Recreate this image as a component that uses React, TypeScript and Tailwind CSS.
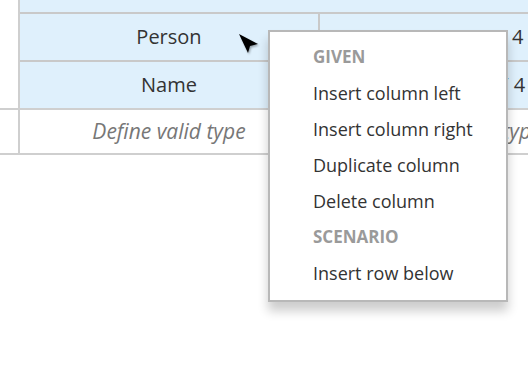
import React from "react";

const font = { fontFamily: '"Open Sans", "Liberation Sans", sans-serif' };

export default function App() {
  return (
    <div className="relative w-[528px] h-[376px] overflow-hidden bg-white" style={font}>
      {/* table */}
      <div className="flex flex-col w-[620px]">
        <div className="flex">
          <div className="w-[20px] h-[108px] border-r-2 border-[#cfcfcf] bg-white" />
          <div className="flex flex-col bg-[#dff0fc]">
            <div className="h-[14px] w-[600px] border-b-2 border-[#c9c9c9]" />
            <div className="flex h-[48px] border-b-2 border-[#c9c9c9]">
              <div className="w-[300px] border-r-2 border-[#c9c9c9] flex items-center justify-center text-[20px] text-[#333]">Person</div>
              <div className="w-[296px] flex items-center justify-center text-[20px] text-[#333]">INSTANCE 4</div>
            </div>
            <div className="flex h-[46px]">
              <div className="w-[300px] border-r-2 border-[#c9c9c9] flex items-center justify-center text-[20px] text-[#333]">Name</div>
              <div className="w-[296px] flex items-center justify-center text-[20px] text-[#333]">PROPERTY 4</div>
            </div>
          </div>
        </div>
        <div className="flex h-[47px] border-y-2 border-[#cfcfcf]">
          <div className="w-[20px] border-r-2 border-[#cfcfcf]" />
          <div className="w-[300px] border-r-2 border-[#cfcfcf] flex items-center justify-center text-[21px] italic text-[#777]">Define valid type</div>
          <div className="w-[290px] flex items-center justify-center text-[21px] italic text-[#777]">Define valid type</div>
        </div>
      </div>

      {/* cursor */}
      <svg className="absolute left-[236px] top-[31px]" width="26" height="26" viewBox="0 0 26 26">
        <defs>
          <filter id="cs" x="-50%" y="-50%" width="200%" height="200%">
            <feGaussianBlur stdDeviation="1.2" />
          </filter>
        </defs>
        <path d="M4 4 L22 13 L14 15 L12 22 Z" fill="#000" opacity="0.35" filter="url(#cs)" transform="translate(1 1.5)" />
        <path d="M3 3 L22 13 L14 15 L12 22 Z" fill="#000" />
      </svg>

      {/* context menu */}
      <div className="absolute left-[268px] top-[30px] w-[240px] h-[272px] bg-white border-2 border-[#b8b8b8] shadow-[0_9px_10px_rgba(0,0,0,0.2)] pt-[7px] pl-[43px] flex flex-col">
        <div className="h-[36px] flex items-center text-[17px] font-bold text-[#9a9a9a]">GIVEN</div>
        <div className="h-[36px] flex items-center text-[18px] text-[#333]">Insert column left</div>
        <div className="h-[36px] flex items-center text-[18px] text-[#333]">Insert column right</div>
        <div className="h-[36px] flex items-center text-[18px] text-[#333]">Duplicate column</div>
        <div className="h-[36px] flex items-center text-[18px] text-[#333]">Delete column</div>
        <div className="h-[36px] flex items-center text-[17px] font-bold text-[#9a9a9a]">SCENARIO</div>
        <div className="h-[36px] flex items-center text-[18px] text-[#333]">Insert row below</div>
      </div>
    </div>
  );
}
